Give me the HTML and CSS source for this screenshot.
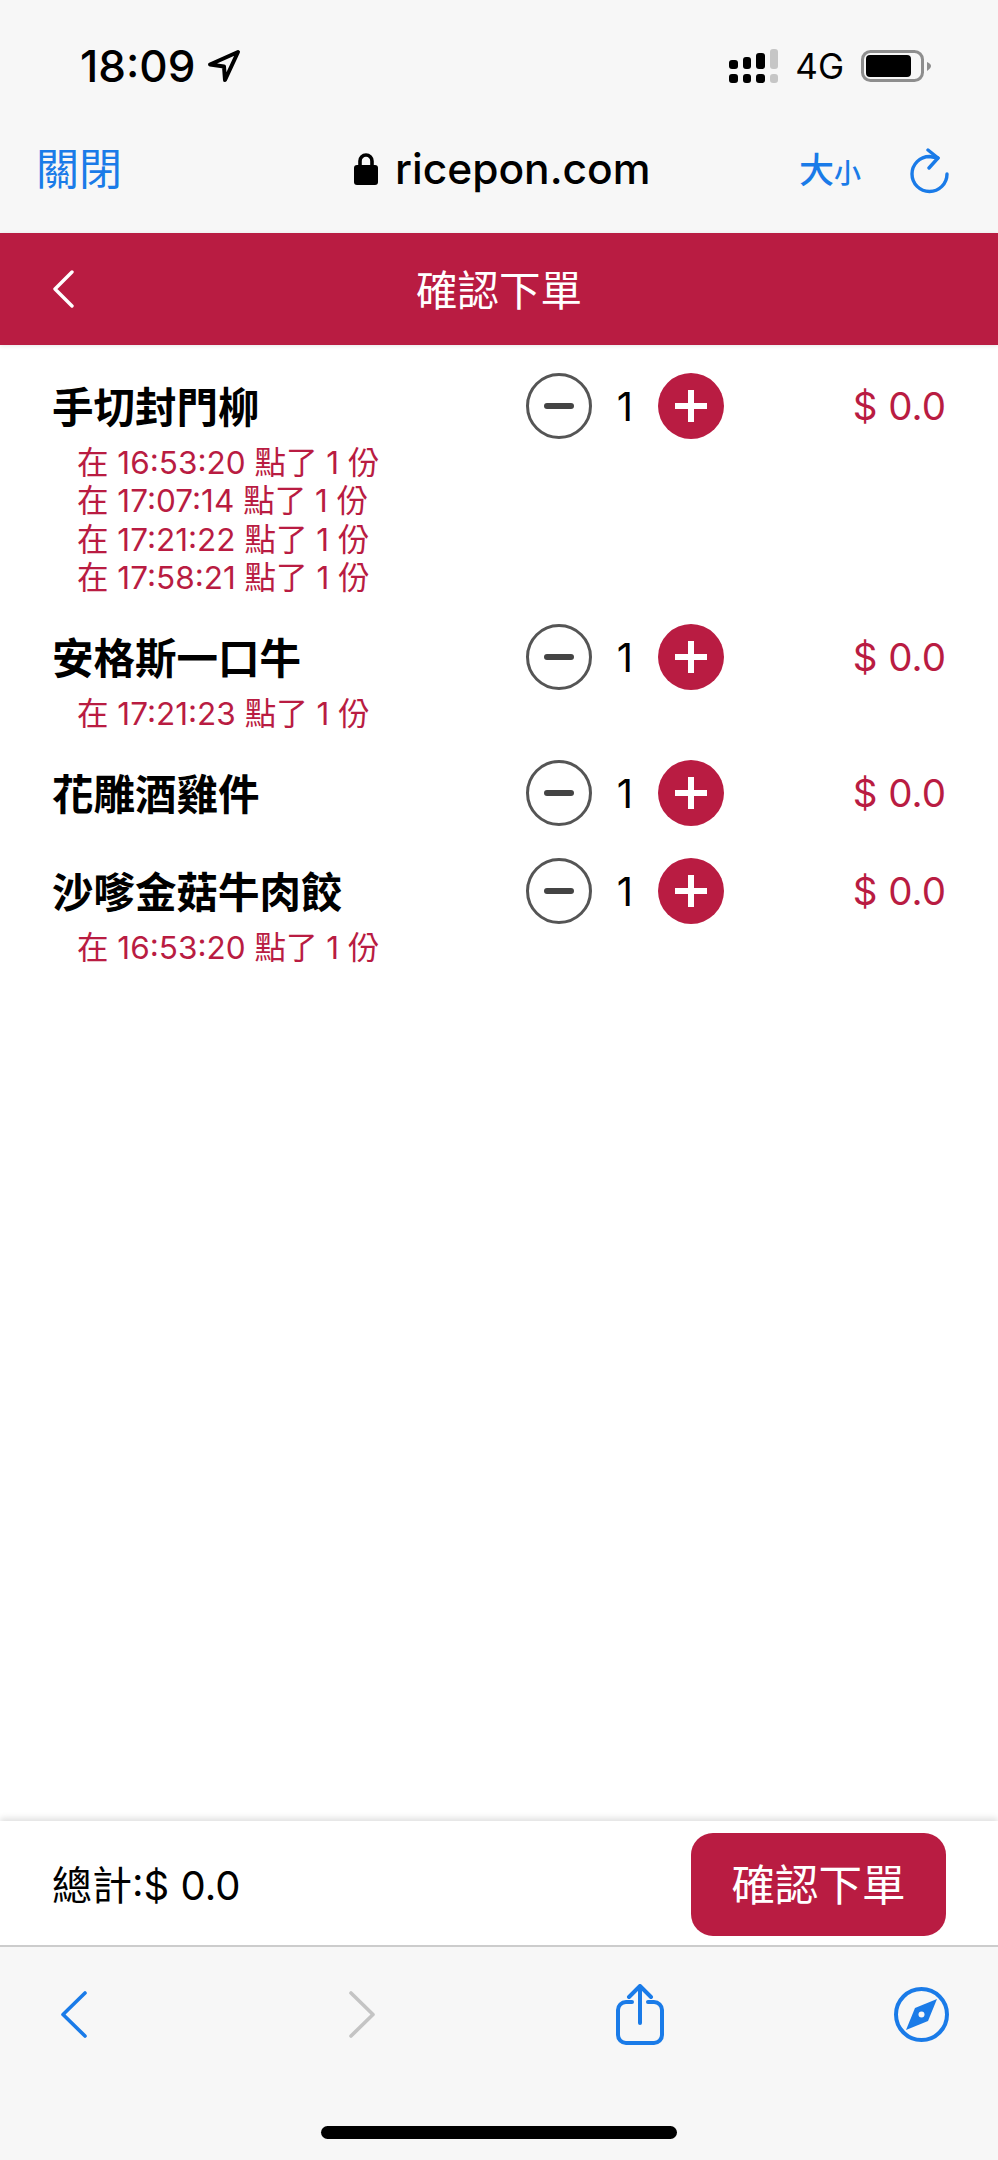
FILE: index.html
```html
<!DOCTYPE html>
<html lang="zh-Hant">
<head>
  <meta charset="utf-8">
  <title>確認下單</title>
  <link rel="stylesheet" href="styles.css">
</head>
<body>
  <div class="app">
    <div class="status-bar">
      <div class="status-time">
        <span>18:09</span>
        <svg class="arrow-icon" width="34" height="34" viewBox="0 0 34 34"><path d="M31 3 L3 15.500 L17 17.500 L18 31 Z" fill="none" stroke="#000" stroke-width="4" stroke-linejoin="round"/></svg>
      </div>
      <div class="status-right">
        <svg width="49" height="34" viewBox="0 0 49 34">
          <rect x="0" y="11" width="9" height="9" rx="3"/>
          <rect x="14" y="8" width="8" height="12" rx="3"/>
          <rect x="27" y="4" width="9" height="16" rx="3"/>
          <rect x="41" y="0" width="8" height="20" rx="3" fill="#c6c6c6"/>
          <rect x="0" y="25" width="9" height="9" rx="3"/>
          <rect x="14" y="25" width="8" height="9" rx="3"/>
          <rect x="27" y="25" width="9" height="9" rx="3"/>
          <rect x="41" y="25" width="8" height="9" rx="3" fill="#c6c6c6"/>
        </svg>
        <span class="network">4G</span>
        <svg width="70" height="32" viewBox="0 0 70 32">
          <rect x="1.5" y="1.5" width="60" height="29" rx="8" fill="none" stroke="#8e8e8e" stroke-width="3"/>
          <rect x="5" y="5" width="45" height="22" rx="4"/>
          <path d="M66 12 C69 13 70 15 70 16 C70 17 69 19 66 21 Z" fill="#8e8e8e"/>
        </svg>
      </div>
    </div>

    <div class="browser-bar">
      <a class="close-link">關閉</a>
      <div class="address">
        <svg width="24" height="33" viewBox="0 0 24 33">
          <path d="M6 15 V9 a6 6 0 0 1 12 0 V15" fill="none" stroke="#000" stroke-width="3.6"/>
          <rect x="0" y="13" width="24" height="20" rx="3"/>
        </svg>
        <span>ricepon.com</span>
      </div>
      <div class="browser-actions">
        <span class="text-size"><span class="big">大</span><span class="small">小</span></span>
        <svg class="refresh" width="39" height="46" viewBox="0 0 39 46" fill="none" stroke="#1a7be8" stroke-width="3.4" stroke-linecap="round" stroke-linejoin="round">
          <path d="M37 26 A17.5 17.5 0 1 1 19.5 8.5 L28 10"/>
          <path d="M18 2 L28 10 L19 20"/>
        </svg>
      </div>
    </div>

    <div class="page-header">
      <svg class="header-back" width="22" height="38" viewBox="0 0 22 38"><path d="M20 2 L3 19 L20 36" fill="none" stroke="#fff" stroke-width="3.4" stroke-linecap="round" stroke-linejoin="round"/></svg>
      <h1>確認下單</h1>
    </div>

    <div class="order-list">
      <div class="order-item">
        <div class="order-row">
          <div class="item-name">手切封門柳</div>
          <div class="stepper">
            <button class="step minus"></button>
            <span class="count">1</span>
            <button class="step plus"></button>
          </div>
          <div class="price">$ 0.0</div>
        </div>
        <div class="notes">
          <div>在 16:53:20 點了 1 份</div>
          <div>在 17:07:14 點了 1 份</div>
          <div>在 17:21:22 點了 1 份</div>
          <div>在 17:58:21 點了 1 份</div>
        </div>
      </div>

      <div class="order-item">
        <div class="order-row">
          <div class="item-name">安格斯一口牛</div>
          <div class="stepper">
            <button class="step minus"></button>
            <span class="count">1</span>
            <button class="step plus"></button>
          </div>
          <div class="price">$ 0.0</div>
        </div>
        <div class="notes">
          <div>在 17:21:23 點了 1 份</div>
        </div>
      </div>

      <div class="order-item no-notes">
        <div class="order-row">
          <div class="item-name">花雕酒雞件</div>
          <div class="stepper">
            <button class="step minus"></button>
            <span class="count">1</span>
            <button class="step plus"></button>
          </div>
          <div class="price">$ 0.0</div>
        </div>
      </div>

      <div class="order-item">
        <div class="order-row">
          <div class="item-name">沙嗲金菇牛肉餃</div>
          <div class="stepper">
            <button class="step minus"></button>
            <span class="count">1</span>
            <button class="step plus"></button>
          </div>
          <div class="price">$ 0.0</div>
        </div>
        <div class="notes">
          <div>在 16:53:20 點了 1 份</div>
        </div>
      </div>
    </div>

    <div class="order-footer">
      <div class="total">總計:$ 0.0</div>
      <button class="confirm">確認下單</button>
    </div>

    <div class="toolbar">
      <div class="toolbar-icons">
        <svg class="tool-back" width="26" height="47" viewBox="0 0 26 47"><path d="M24 2 L2 23.500 L24 45" fill="none" stroke="#1a7be8" stroke-width="3.6" stroke-linecap="round" stroke-linejoin="round"/></svg>
        <svg class="tool-forward" width="26" height="47" viewBox="0 0 26 47"><path d="M2 2 L24 23.500 L2 45" fill="none" stroke="#c4c4c4" stroke-width="3.6" stroke-linecap="round" stroke-linejoin="round"/></svg>
        <svg class="tool-share" width="48" height="61" viewBox="0 0 48 61" fill="none" stroke="#1a7be8" stroke-width="4" stroke-linecap="round" stroke-linejoin="round">
          <path d="M16 18 H10 a8 8 0 0 0 -8 8 V51 a8 8 0 0 0 8 8 H38 a8 8 0 0 0 8 -8 V26 a8 8 0 0 0 -8 -8 H32"/>
          <path d="M24 3 V39"/>
          <path d="M13 13 L24 2 L35 13"/>
        </svg>
        <svg class="tool-compass" width="55" height="55" viewBox="0 0 55 55">
          <circle cx="27.500" cy="27.500" r="25.500" fill="none" stroke="#1a7be8" stroke-width="4"/>
          <path d="M43 12 L21 21 L12 43 L34 34 Z" fill="#1a7be8"/>
          <circle cx="27.500" cy="27.500" r="3" fill="#f7f7f7"/>
        </svg>
      </div>
      <div class="home-indicator"></div>
    </div>
  </div>
</body>
</html>
```

FILE: styles.css
```css
* {
  box-sizing: border-box;
}
body {
  margin: 0;
  font-family: 'Inter', 'Noto Sans CJK TC', sans-serif;
  background-color: #fff;
  color: #000;
}
.app {
  display: flex;
  flex-direction: column;
  height: 2160px;
}

/* phone status bar */
.status-bar {
  display: flex;
  justify-content: space-between;
  align-items: center;
  height: 120px;
  padding: 12px 67px 0 80px;
  background-color: #f7f7f7;
}
.status-time {
  display: flex;
  align-items: center;
  gap: 12px;
  font-size: 44px;
  font-weight: 500;
}
.status-right {
  display: flex;
  align-items: center;
}
.network {
  margin: 0 17px 0 17px;
  font-size: 35px;
}

/* browser bar */
.browser-bar {
  display: grid;
  grid-template-columns: 318px 1fr auto;
  align-items: center;
  height: 113px;
  padding: 0 49px 16px 36px;
  background-color: #f7f7f7;
}
.close-link {
  padding-bottom: 5px;
  color: #1a7be8;
  font-size: 43px;
}
.address {
  display: flex;
  align-items: center;
  gap: 17px;
  font-size: 42.5px;
  font-weight: 500;
}
.browser-actions {
  display: flex;
  align-items: center;
  gap: 49px;
}
.text-size {
  padding-bottom: 2px;
  color: #1a7be8;
  font-weight: 500;
}
.text-size .big {
  font-size: 35px;
}
.text-size .small {
  font-size: 27px;
}
.refresh {
  margin-top: 4px;
}

/* page header */
.page-header {
  position: relative;
  display: flex;
  justify-content: center;
  align-items: center;
  height: 112px;
  padding-bottom: 3px;
  background-color: #b91c42;
  box-shadow: 0 1px 4px rgba(0, 0, 0, 0.1);
}
.page-header h1 {
  margin: 0;
  color: #fff;
  font-size: 41.5px;
  font-weight: 400;
}
.header-back {
  position: absolute;
  left: 52px;
  top: 37px;
}

/* order rows */
.order-list {
  flex: 1;
  padding: 28px 52px 0 52px;
}
.order-item {
  margin-bottom: 27px;
}
.no-notes {
  padding-bottom: 5px;
}
.order-row {
  display: flex;
  align-items: center;
}
.item-name {
  width: 474px;
  padding-bottom: 3px;
  font-size: 41.5px;
  font-weight: 600;
}
.stepper {
  display: flex;
  align-items: center;
  justify-content: space-between;
  width: 198px;
}
.step {
  position: relative;
  width: 66px;
  height: 66px;
  padding: 0;
  border-radius: 50%;
}
.minus {
  background-color: #fff;
  border: 3px solid #555;
}
.minus::before {
  content: "";
  position: absolute;
  left: 15px;
  top: 27px;
  width: 30px;
  height: 6px;
  border-radius: 3px;
  background-color: #444;
}
.plus {
  background-color: #b91c42;
  border: none;
}
.plus::before, .plus::after {
  content: "";
  position: absolute;
  background-color: #fff;
}
.plus::before {
  left: 17px;
  top: 30px;
  width: 32px;
  height: 6px;
}
.plus::after {
  left: 30px;
  top: 17px;
  width: 6px;
  height: 32px;
}
.count {
  font-size: 40px;
}
.price {
  flex: 1;
  color: #b91c42;
  font-size: 38.5px;
  text-align: right;
}
.notes {
  margin-top: 5px;
  padding-left: 25px;
  color: #b91c42;
  font-size: 31.5px;
  line-height: 38.3px;
}

/* footer */
.order-footer {
  display: flex;
  justify-content: space-between;
  align-items: center;
  height: 126px;
  padding: 3px 52px 0 52px;
  border-bottom: 2px solid #ccc;
  box-shadow: 0 -3px 6px rgba(0, 0, 0, 0.12);
}
.total {
  padding-bottom: 4px;
  font-size: 40px;
}
.confirm {
  width: 255px;
  height: 103px;
  padding-bottom: 5px;
  border: none;
  border-radius: 22px;
  background-color: #b91c42;
  color: #fff;
  font-family: inherit;
  font-size: 43.5px;
}

/* safari toolbar */
.toolbar {
  height: 213px;
  padding-top: 37px;
  background-color: #f7f7f7;
}
.toolbar-icons {
  display: flex;
  align-items: center;
  height: 61px;
  padding-left: 61px;
}
.tool-forward {
  margin-left: 262px;
}
.tool-share {
  margin-left: 241px;
}
.tool-compass {
  margin-left: 230px;
}
.home-indicator {
  width: 356px;
  height: 13px;
  margin: 81px auto 0 auto;
  border-radius: 7px;
  background-color: #000;
}
```
